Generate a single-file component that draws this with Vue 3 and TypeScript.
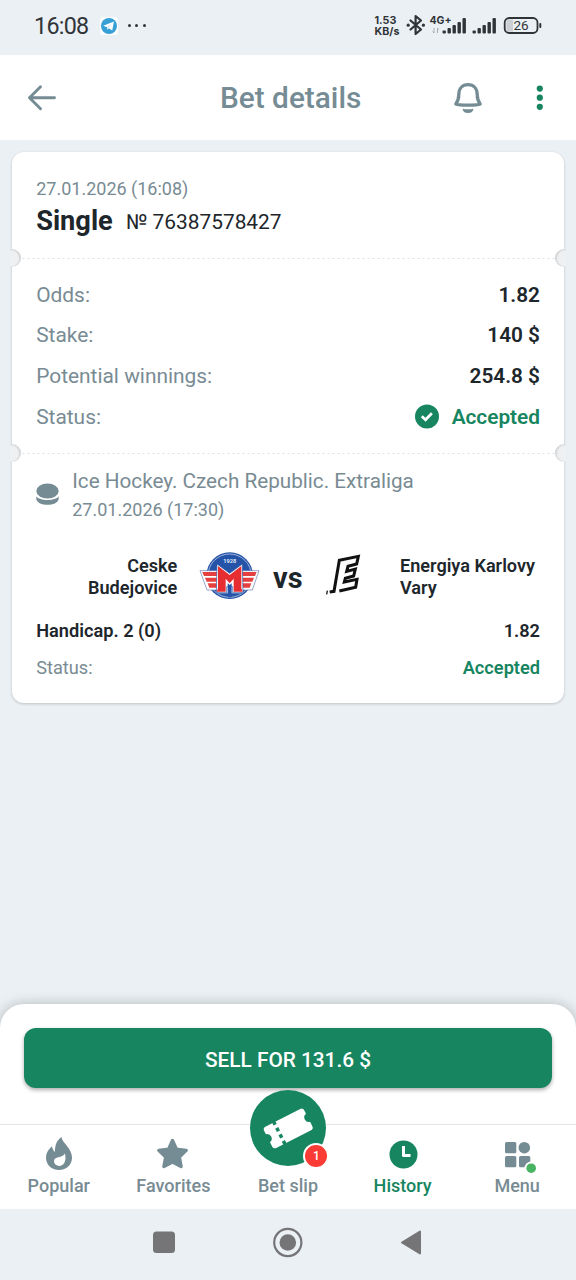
<script setup lang="ts">
interface Row {
  label: string
  value: string
  accepted?: boolean
}

const summary: Row[] = [
  { label: 'Odds:', value: '1.82' },
  { label: 'Stake:', value: '140 $' },
  { label: 'Potential winnings:', value: '254.8 $' },
  { label: 'Status:', value: 'Accepted', accepted: true },
]
</script>

<template>
  <div class="screen">
    <div class="status-bar">
      <span class="clock">16:08</span>
      <svg class="telegram" width="18" height="18" viewBox="0 0 18 18">
        <rect width="18" height="18" rx="3" fill="#fafcfd" />
        <circle cx="9" cy="9" r="8" fill="#36a0d6" />
        <path d="M3.2 8.8 14 4.6 12.2 13.6 8.9 11.2 7.3 12.8 7 10.2Z" fill="#fff" />
        <path d="M7 10.2 11.5 6.7 8.1 10.8 7.3 12.8Z" fill="#b9dced" />
      </svg>
      <span class="dots"><i></i><i></i><i></i></span>
      <span class="speed"><span>1.53</span><span>KB/s</span></span>
      <svg class="radio" width="168" height="28" viewBox="404 12 168 28">
        <g fill="none" stroke="#303438" stroke-width="2.2" stroke-linejoin="round" stroke-linecap="round">
          <path d="M409.5 20.5 420 29.5 414.6 34V16L420 20.5 409.5 29.5" />
        </g>
        <g fill="#303438">
          <circle cx="407.2" cy="25.2" r="1.6" /><circle cx="422.4" cy="25.2" r="1.6" />
          <rect x="441.5" y="30.5" width="3.4" height="3" rx="1" />
          <rect x="446.5" y="28" width="3.4" height="5.5" rx="1" />
          <rect x="451.5" y="25" width="3.4" height="8.5" rx="1" />
          <rect x="456.5" y="22" width="3.4" height="11.5" rx="1" />
          <rect x="461.5" y="18" width="3.4" height="15.5" rx="1" />
          <rect x="471.5" y="30.5" width="3.4" height="3" rx="1" />
          <rect x="476.5" y="28" width="3.4" height="5.5" rx="1" />
          <rect x="481.5" y="25" width="3.4" height="8.5" rx="1" />
          <rect x="486.5" y="22" width="3.4" height="11.5" rx="1" />
          <rect x="491.5" y="18" width="3.4" height="15.5" rx="1" />
          <rect x="538.3" y="23" width="2" height="5" rx="1" />
        </g>
        <path d="M433 28v5m-1.5-1.5 1.5 1.5M436.5 33v-5m1.5 1.5-1.5-1.5" stroke="#a9acae" fill="none" />
        <text x="428.5" y="24.2" class="net">4G+</text>
        <rect x="505.500" y="19.500" width="6.500" height="12" fill="#cdd0d2" />
        <rect x="503.700" y="18" width="32.800" height="15" rx="4.500" fill="none" stroke="#303438" stroke-width="1.800" />
        <text x="520" y="30.300" text-anchor="middle" class="battery">26</text>
      </svg>
    </div>

    <header class="header">
      <svg class="back" width="30" height="26" viewBox="0 0 30 26" fill="none" stroke="#758c95" stroke-width="2.900" stroke-linecap="round" stroke-linejoin="round">
        <path d="M27.500 12.800H2.500M13.500 1.800 2.500 12.800 13.500 23.800" />
      </svg>
      <h1>Bet details</h1>
      <svg class="bell" width="30" height="32" viewBox="0 0 30 32" fill="none" stroke="#758c95" stroke-linecap="round" stroke-linejoin="round">
        <path d="M2.800 22C5.200 19 5.800 16.500 5.800 12.500 5.800 6.500 9.500 2.700 15 2.700S24.200 6.500 24.200 12.500C24.200 16.500 24.800 19 27.200 22 24 23.600 6 23.600 2.800 22Z" stroke-width="3.300" />
        <path d="M9.500 26.800Q15 27.800 20.500 26.800 20 31 15 31T9.500 26.800Z" fill="#758c95" stroke="none" />
      </svg>
      <svg class="kebab" width="8" height="26" viewBox="0 0 8 26" fill="#168560">
        <circle cx="3.800" cy="3.600" r="3.100" /><circle cx="3.800" cy="12.700" r="3.100" /><circle cx="3.800" cy="21.800" r="3.100" />
      </svg>
    </header>

    <main class="content">
      <article class="card">
        <section class="bet-head">
          <div class="muted small">27.01.2026 (16:08)</div>
          <div class="bet-title"><b>Single</b><span>№ 76387578427</span></div>
        </section>

        <section class="summary perforated">
          <div v-for="row in summary" :key="row.label" class="row">
            <span class="muted">{{ row.label }}</span>
            <span class="value" :class="{ green: row.accepted }">
              <svg v-if="row.accepted" width="24" height="24" viewBox="0 0 24 24">
                <circle cx="12" cy="11.500" r="12" fill="#168560" />
                <path d="M6.800 11.300 10.500 14.800 16.900 8.200" fill="none" stroke="#fff" stroke-width="2.700" />
              </svg>{{ row.value }}
            </span>
          </div>
        </section>

        <section class="event perforated">
          <div class="league">
            <svg width="24" height="24" viewBox="0 0 24 24" fill="#758c95">
              <ellipse cx="11.500" cy="9" rx="11.200" ry="7.400" />
              <path d="M.3 14.300C3.500 19.300 19.500 19.300 22.700 14.300V17C21.500 24.800 1.500 24.800.3 17Z" />
            </svg>
            <div>
              <div class="muted league-name">Ice Hockey. Czech Republic. Extraliga</div>
              <div class="muted small">27.01.2026 (17:30)</div>
            </div>
          </div>

          <div class="match">
            <div class="team home">Ceske<br />Budejovice</div>
            <svg class="logo-home" width="61" height="49" viewBox="30 33 183 147">
              <circle cx="122" cy="107" r="70" fill="#2453a8" />
              <circle cx="122" cy="107" r="65" fill="none" stroke="#b8c9e4" stroke-width="2.500" />
              <path d="M33 92H90L122 120 154 92H210L190 150H155V160H89V150H54Z" fill="#fff" stroke="#6579b2" stroke-width="2" />
              <path d="M40 96H90V108H45ZM48 113H86V125H53ZM56 130H84V143H61ZM203 96H154V108H198ZM195 113H158V125H190ZM187 130H160V143H182Z" fill="#e4403f" />
              <path d="M84 72 122 100 160 72 162 158H131V140H113V158H82Z" fill="#fff" stroke="#2453a8" stroke-width="2" />
              <path d="M87 78 122 105 157 78V145L161 155H134V116L122 130 110 116V155H83L87 145Z" fill="#e52d32" />
              <path d="M116 130 122 135 128 130V172H116Z" fill="#2453a8" />
              <text x="122" y="70" text-anchor="middle" class="year">1928</text>
            </svg>
            <span class="versus">vs</span>
            <svg class="logo-away" width="36" height="42" viewBox="115 42 108 126" fill="none" stroke="#111" stroke-width="9" stroke-linejoin="miter">
              <path d="M129 156 142 154 158 61 215 49 210 72 184 79 180 94 206 87 201 108 176 115 173 126 211 118 207 142 158 153" />
              <path d="M120 163 122 152" stroke-width="4" />
            </svg>
            <div class="team away">Energiya Karlovy<br />Vary</div>
          </div>

          <div class="market"><span>Handicap. 2 (0)</span><span>1.82</span></div>
          <div class="outcome"><span class="muted">Status:</span><span class="green">Accepted</span></div>
        </section>
      </article>
    </main>

    <footer class="sheet">
      <button class="sell">SELL FOR 131.6 $</button>
      <nav class="tabs">
        <div class="tab">
          <svg width="28" height="34" viewBox="0 0 28 34">
            <path d="M16.500 0C17 6 27 11 27 20.500 27 28 21.500 33 14 33S1 28 1 20.500C1 16 3.200 12.500 7 9.200 7.500 12 8.500 14 10 15 9.800 8 12 3 16.500 0Z" fill="#758c95" />
            <path d="M20 16.500C20.500 20 21 22 19.500 25.500 17.500 30.300 9.500 30 9 24.500 8.700 18.500 17.500 21.500 20 16.500Z" fill="#fff" />
          </svg><span>Popular</span>
        </div>
        <div class="tab">
          <svg width="34" height="34" viewBox="0 0 34 34">
            <path d="m16.500 3.500 3.900 8.600 9.800 1.300-6.900 6.700 1.800 9.400L16.500 25l-8.600 4.500 1.800-9.400-6.900-6.700 9.800-1.300Z" fill="#758c95" stroke="#758c95" stroke-width="3.400" stroke-linejoin="round" />
          </svg><span>Favorites</span>
        </div>
        <div class="tab">
          <div class="slip">
            <svg width="76" height="76" viewBox="0 0 76 76">
              <g transform="rotate(-27 38 38)">
                <path d="M19 26.500H57Q60.500 26.500 60.500 29.500V33.500A4.600 4.600 0 0 0 60.500 42.500V47.500Q60.500 50.500 57 50.500H19Q15.500 50.500 15.500 47.500V42.500A4.600 4.600 0 0 0 15.500 33.500V29.500Q15.500 26.500 19 26.500Z" fill="#fff" />
                <path d="M28 25.500V51.500" stroke="#168560" stroke-width="3.500" stroke-dasharray="3.800 3.500" />
              </g>
            </svg>
            <span class="count">1</span>
          </div>
          <span>Bet slip</span>
        </div>
        <div class="tab active">
          <svg width="34" height="34" viewBox="0 0 34 34">
            <circle cx="17.500" cy="17.500" r="14" fill="#168560" />
            <path d="M17.500 9V18.500H24.500" fill="none" stroke="#fff" stroke-width="3" stroke-linejoin="round" />
          </svg><span>History</span>
        </div>
        <div class="tab">
          <svg width="34" height="34" viewBox="0 0 34 34" fill="#758c95">
            <rect x="5" y="5" width="11.300" height="11.300" rx="1.500" />
            <circle cx="24.300" cy="10.700" r="5.800" />
            <rect x="5" y="19" width="11.300" height="11.300" rx="1.500" />
            <rect x="19" y="19" width="11.300" height="11.300" rx="1.500" />
            <circle cx="31.200" cy="31.200" r="6.700" fill="#fff" />
            <circle cx="31.200" cy="31.200" r="4.800" fill="#48b461" />
          </svg><span>Menu</span>
        </div>
      </nav>
    </footer>

    <div class="system-nav">
      <svg width="576" height="71" viewBox="0 1209 576 71" fill="#757577">
        <rect x="153" y="1231.500" width="22" height="21.500" rx="3.500" />
        <circle cx="287.800" cy="1242.500" r="8.300" />
        <circle cx="287.800" cy="1242.500" r="13.600" fill="none" stroke="#757577" stroke-width="2.200" />
        <path d="M402 1242.500 420 1231.500V1253.500Z" stroke="#757577" stroke-width="2" stroke-linejoin="round" />
      </svg>
    </div>
  </div>
</template>

<style>
body {
  margin: 0;
}
</style>

<style scoped>
.screen {
  width: 576px;
  height: 1280px;
  display: flex;
  flex-direction: column;
  overflow: hidden;
  background: #ebf0f4;
  color: #1d262b;
  font-family: Roboto, "Liberation Sans", sans-serif;
  font-size: 21px;
}
svg {
  display: block;
  flex: none;
  overflow: visible;
}
.muted {
  color: #788b93;
}
.small {
  font-size: 18px;
  line-height: 24px;
}
.green {
  color: #168560;
}
.status-bar {
  flex: none;
  height: 55px;
  box-sizing: border-box;
  padding: 12px 0 0 34px;
  display: flex;
  align-items: flex-start;
  color: #303438;
}
.clock {
  width: 65.5px;
  font-size: 23.3px;
  line-height: 28px;
  letter-spacing: -0.7px;
}
.telegram {
  margin-top: 5px;
}
.dots {
  display: flex;
  gap: 4.5px;
  margin: 12px 0 0 10px;
}
.dots i {
  width: 3px;
  height: 3px;
  border-radius: 50%;
  background: #303438;
}
.speed {
  display: flex;
  flex-direction: column;
  width: 30px;
  margin: 3px 0 0 229px;
  font: 700 10.7px/11px Inter, Roboto, sans-serif;
}
.net {
  font: 700 10.5px Inter, sans-serif;
  fill: #303438;
}
.battery {
  font: 400 13.5px Roboto, sans-serif;
  fill: #303438;
}
.year {
  font: 700 17px Roboto, sans-serif;
  fill: #dfe8f6;
}
.header {
  flex: none;
  height: 85px;
  box-sizing: border-box;
  padding: 0 32px 0 27px;
  display: flex;
  align-items: center;
  background: #fff;
}
h1 {
  width: 141px;
  margin: 0 92px 0 163px;
  color: #758c95;
  font-size: 29.8px;
  font-weight: 500;
  line-height: 36px;
  white-space: nowrap;
}
.kebab {
  margin-left: auto;
}
.content {
  flex: 1;
  padding: 12px;
}
.card {
  height: 551px;
  border-radius: 12px;
  background: #fff;
  box-shadow: 0 1px 3px #0003;
}
.bet-head {
  height: 106px;
  box-sizing: border-box;
  padding: 25px 24px 0 24.2px;
}
.bet-title {
  display: flex;
  align-items: baseline;
  gap: 13px;
  margin-top: 3px;
  line-height: 34px;
}
.bet-title b {
  font-size: 27.2px;
}
.bet-title span {
  position: relative;
  top: -1px;
  font-size: 20.9px;
}
.perforated {
  position: relative;
  background: radial-gradient(circle, #dcdfe1 1.1px, #fff 1.7px) 9px -2px / 5px 3px repeat-x;
}
.perforated::before,
.perforated::after {
  content: "";
  position: absolute;
  top: -9px;
  width: 18px;
  height: 18px;
  border-radius: 50%;
  background: #eef0f2;
}
.perforated::before {
  left: -9px;
  clip-path: inset(0 0 0 7px);
  box-shadow: inset -1.5px 0.5px 2px #0002;
}
.perforated::after {
  right: -9px;
  clip-path: inset(0 7px 0 0);
  box-shadow: inset 1.5px 0.5px 2px #0002;
}
.summary {
  height: 195px;
  box-sizing: border-box;
  padding: 16.5px 24px 0 24.2px;
}
.row {
  height: 40.6px;
  display: flex;
  align-items: center;
  justify-content: space-between;
}
.row .muted {
  font-size: 20.9px;
}
.value {
  display: flex;
  align-items: center;
  gap: 13px;
  font-size: 20.8px;
  font-weight: 600;
}
.event {
  height: 250px;
  box-sizing: border-box;
  padding: 15px 24px 0 24.2px;
}
.league {
  display: flex;
  gap: 12px;
}
.league svg {
  margin-top: 14px;
}
.league-name {
  font-size: 20.7px;
  line-height: 26px;
  margin-bottom: 4px;
}
.match {
  display: flex;
  margin-top: 29px;
  height: 49px;
}
.team {
  margin-top: 4px;
  font-size: 18.1px;
  font-weight: 600;
  line-height: 21.5px;
}
.home {
  width: 141px;
  text-align: right;
}
.logo-home {
  margin-left: 22.3px;
}
.versus {
  width: 54px;
  margin-left: 12.5px;
  font-size: 29px;
  font-weight: 700;
  line-height: 54px;
}
.logo-away {
  margin-top: 3px;
  margin-left: -1.5px;
}
.away {
  margin-left: 38.5px;
  white-space: nowrap;
}
.market,
.outcome {
  display: flex;
  justify-content: space-between;
  font-size: 18.2px;
  font-weight: 600;
  line-height: 24px;
}
.market {
  margin-top: 19px;
}
.outcome {
  margin-top: 13px;
}
.outcome .muted {
  font-weight: 400;
}
.sheet {
  flex: none;
  height: 205px;
  box-sizing: border-box;
  padding-top: 24px;
  border-radius: 24px 24px 0 0;
  background: #fff;
  box-shadow: 0 1px 14px #0004;
}
.sell {
  display: block;
  width: 528px;
  height: 60px;
  margin: 0 auto;
  padding: 3px 0 0;
  border: 0;
  border-radius: 12px;
  background: #168560;
  box-shadow: 0 2px 4px #0005;
  color: #fff;
  font: 500 20.8px Roboto, sans-serif;
}
.tabs {
  display: grid;
  grid-template-columns: repeat(5, 1fr);
  height: 85px;
  box-sizing: border-box;
  margin-top: 36px;
  padding: 0 1.5px;
  border-top: 1px solid #e2e6e8;
}
.tab {
  display: flex;
  flex-direction: column;
  align-items: center;
  padding-top: 12px;
  color: #788b93;
  font-size: 18px;
  font-weight: 500;
  line-height: 24px;
}
.tab > span {
  margin-top: 3px;
}
.active {
  color: #168560;
}
.slip {
  position: relative;
  width: 76px;
  height: 76px;
  margin-top: -47px;
  margin-bottom: 5px;
  border-radius: 50%;
  background: #168560;
}
.count {
  position: absolute;
  right: -3.5px;
  bottom: -3px;
  width: 22px;
  height: 22px;
  border: 2px solid #fff;
  border-radius: 50%;
  background: #fb3b35;
  color: #fff;
  font-size: 12px;
  font-weight: 500;
  line-height: 22px;
  text-align: center;
}
.system-nav {
  flex: none;
  position: relative;
  height: 71px;
  background: #ebf0f4;
}
</style>
